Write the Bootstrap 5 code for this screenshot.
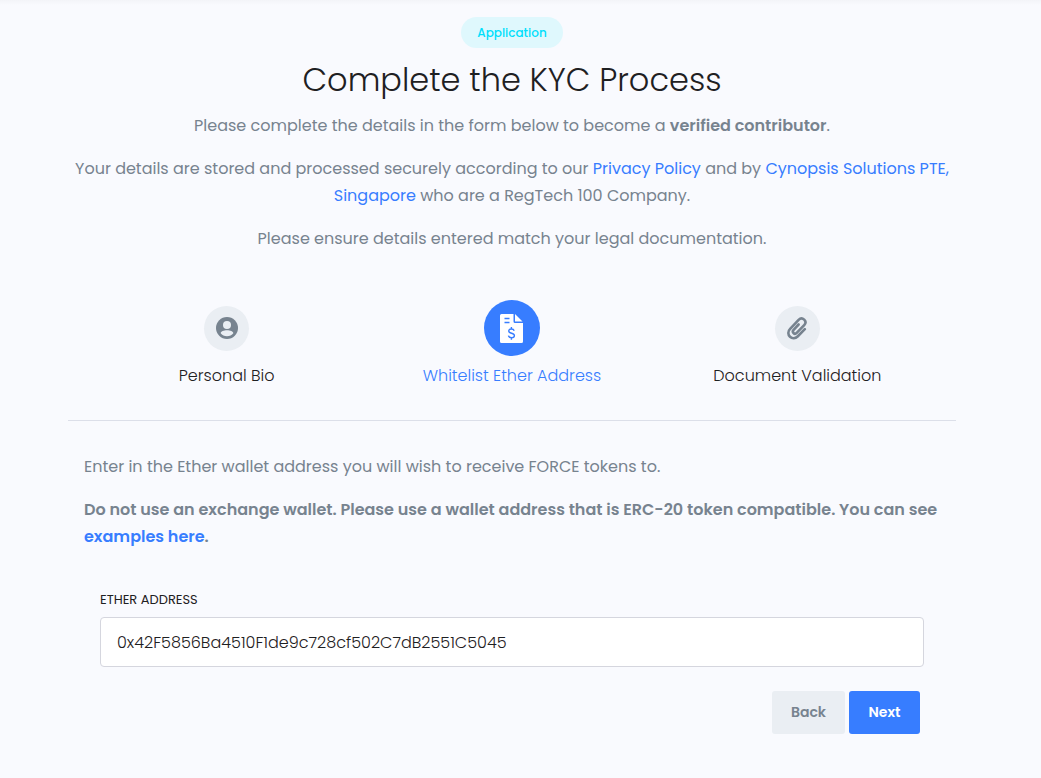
<!DOCTYPE html>
<html lang="en">
<head>
<meta charset="utf-8">
<meta name="viewport" content="width=device-width, initial-scale=1">
<title>Complete the KYC Process</title>
<link href="https://cdn.jsdelivr.net/npm/bootstrap@5.3.0/dist/css/bootstrap.min.css" rel="stylesheet">
<style>
  body { background: #f9fafe; color: #77838f; font-family: Poppins, Inter, "Open Sans", sans-serif; font-size: 16px; line-height: 27px; }
  .top-shade { height: 5px; background: linear-gradient(#f3f4f8, #f9fafe); }
  .page { padding-right: 17px; }
  .kyc { max-width: 888px; }
  a { color: #377dff; text-decoration: none; }
  .intro p { margin-bottom: 16px; }
  strong { font-weight: 600; }
  .tag { background: #dff8fd; color: #00dffc; font-size: 12px; font-weight: 500; line-height: 15px; padding: 8px 16px; }
  h1 { color: #1e2022; font-size: 32px; font-weight: 300; line-height: 48px; margin: 8px 0; }
  .step { color: #1e2022; font-weight: 300; }
  .step-icon { height: 56px; margin-bottom: 6px; }
  .disc { width: 45px; height: 45px; background: #eaeef3; color: #77838f; }
  .step.active { color: #377dff; }
  .step.active .disc { width: 56px; height: 56px; background: #377dff; color: #fff; }
  .rule { border-color: #dcdfe9; opacity: 1; margin: 31px 0 32px; }
  .form-label { color: #1e2022; font-size: 13px; line-height: 19px; margin-bottom: 8px; }
  .form-control { height: 50px; padding: 12px 16px; border-color: #d5d6de; border-radius: 4px; color: #1e2022; font-weight: 300; }
  .btn { height: 43px; font-size: 14px; font-weight: 600; border: 0; border-radius: 3px; padding: 0; }
  .btn-back { width: 73px; background: #eaeef3; color: #77838f; }
  .btn-next { width: 71px; background: #377dff; color: #fff; }
</style>
</head>
<body>
<div class="top-shade"></div>
<div class="page">
<main class="kyc container-fluid p-0 pt-1">
  <header class="intro text-center pt-2">
    <span class="tag d-inline-block rounded-pill">Application</span>
    <h1>Complete the KYC Process</h1>
    <p>Please complete the details in the form below to become a <strong>verified contributor</strong>.</p>
    <p>Your details are stored and processed securely according to our <a href="#">Privacy Policy</a> and by <a href="#">Cynopsis Solutions PTE, Singapore</a> who are a RegTech 100 Company.</p>
    <p>Please ensure details entered match your legal documentation.</p>
  </header>
  <div class="px-3 pt-4 mt-2">
    <div class="row g-0 text-center pt-2">
      <div class="col step">
        <div class="step-icon d-flex align-items-center justify-content-center"><span class="disc rounded-circle d-flex align-items-center justify-content-center">
          <svg width="22" height="22" viewBox="0 0 22 22" aria-hidden="true"><circle cx="11" cy="11" r="11" fill="currentColor"/><circle cx="11" cy="8" r="4" fill="#eaeef3"/><path d="M4.7 16.2c0-2 3.2-3 6.3-3s6.3 1 6.3 3c-1.4 2-3.700 3-6.3 3s-4.900-1-6.300-3z" fill="#eaeef3"/></svg>
        </span></div>
        <div>Personal Bio</div>
      </div>
      <div class="col step active">
        <div class="step-icon d-flex align-items-center justify-content-center"><span class="disc rounded-circle d-flex align-items-center justify-content-center">
          <svg width="23" height="29" viewBox="0 0 23 29" aria-hidden="true"><path d="M1.500 0H13.500v7.500q0 1.500 1.500 1.500H23v18.500q0 1.500-1.500 1.500h-20Q0 29 0 27.500v-26Q0 0 1.500 0z" fill="#fff"/><path d="M15 0L22.500 7.500H15z" fill="#fff"/><path d="M4.500 4.500h5M4.500 8.500h5" stroke="#377dff" stroke-width="1.400"/><path d="M14.200 16.700c-.4-1.200-1.400-1.700-2.800-1.700-1.600 0-2.700.8-2.700 2 0 3 5.700 1.500 5.700 4.500 0 1.400-1.200 2.200-2.900 2.200-1.600 0-2.800-.7-3.100-2M11.400 13v2M11.400 23.700v2" fill="none" stroke="#377dff" stroke-width="1.400"/></svg>
        </span></div>
        <div>Whitelist Ether Address</div>
      </div>
      <div class="col step">
        <div class="step-icon d-flex align-items-center justify-content-center"><span class="disc rounded-circle d-flex align-items-center justify-content-center">
          <svg width="22" height="24" viewBox="0 0 22 24" fill="none" stroke="currentColor" stroke-width="2.600" stroke-linecap="round" stroke-linejoin="round" aria-hidden="true"><path d="M18.800 13.200l-7.200 7.300c-2.200 2.200-5.500 2.200-7.600.2-2.200-2.100-2.200-5.400-.1-7.500l8.700-9.400c1.700-1.700 4-1.700 5.600-.2 1.600 1.600 1.600 3.900 0 5.600l-7.500 7.700c-1 1-2.300 1-3.200.1-.9-.9-.8-2.200.1-3.200l5-5.300"/></svg>
        </span></div>
        <div>Document Validation</div>
      </div>
    </div>
  </div>
  <hr class="rule">
  <form class="px-3" onsubmit="return false">
    <p>Enter in the Ether wallet address you will wish to receive FORCE tokens to.</p>
    <p><strong>Do not use an exchange wallet. Please use a wallet address that is ERC-20 token compatible. You can see <a href="#">examples here</a>.</strong></p>
    <div class="px-3 pt-4">
      <label for="ether" class="form-label d-block">ETHER ADDRESS</label>
      <input id="ether" type="text" class="form-control" value="0x42F5856Ba4510F1de9c728cf502C7dB2551C5045">
      <div class="d-flex justify-content-end gap-1 mt-4 me-1">
        <button type="button" class="btn btn-back">Back</button>
        <button type="submit" class="btn btn-next">Next</button>
      </div>
    </div>
  </form>
</main>
</div>
<script src="https://cdn.jsdelivr.net/npm/bootstrap@5.3.0/dist/js/bootstrap.bundle.min.js"></script>
</body>
</html>
